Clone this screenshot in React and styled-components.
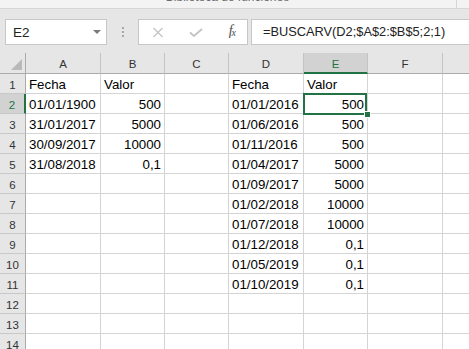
import React from 'react';
import styled, {createGlobalStyle} from 'styled-components';

const GREEN = '#217346';
const FONT = '"Liberation Sans", Arial, sans-serif';

// row header + columns A..G
const colWidths = [26, 75, 64, 64, 75, 64, 75, 75];
// last grid column (G) is only partly on screen, its letter lies past the edge
const letters = ['A', 'B', 'C', 'D', 'E', 'F', ''];

const left = [
  ['Fecha', 'Valor'],
  ['01/01/1900', '500'],
  ['31/01/2017', '5000'],
  ['30/09/2017', '10000'],
  ['31/08/2018', '0,1'],
];

const right = [
  ['Fecha', 'Valor'],
  ['01/01/2016', '500'],
  ['01/06/2016', '500'],
  ['01/11/2016', '500'],
  ['01/04/2017', '5000'],
  ['01/09/2017', '5000'],
  ['01/02/2018', '10000'],
  ['01/07/2018', '10000'],
  ['01/12/2018', '0,1'],
  ['01/05/2019', '0,1'],
  ['01/10/2019', '0,1'],
];

const ROWS = 14;
const SEL = {row: 2, col: 'E'};

function cellValue(r, c) {
  const L = left[r - 1];
  const R = right[r - 1];
  if (c === 'A' && L) return {text: L[0]};
  if (c === 'B' && L) return {text: L[1], num: r > 1};
  if (c === 'D' && R) return {text: R[0]};
  if (c === 'E' && R) return {text: R[1], num: r > 1};
  return {text: ''};
}

export default function App() {
  return (
    <>
      <GlobalStyle/>
      <Ribbon>
        <RibbonLabel>Biblioteca de funciones</RibbonLabel>
        <RibbonSep/>
      </Ribbon>
      <Toolbar>
        <NameBox>
          <span>E2</span>
          <Caret/>
        </NameBox>
        <Grip>
          <i/><i/><i/>
        </Grip>
        <FxButtons>
          <svg width="12" height="11" viewBox="0 0 12 11">
            <path d="M1.5 1 L10.5 10 M10.5 1 L1.5 10" stroke="#c3c3c3" strokeWidth="1.2" fill="none"/>
          </svg>
          <svg width="14" height="9" viewBox="0 0 14 9">
            <path d="M1 4.5 L5 8 L13 1" stroke="#c3c3c3" strokeWidth="1.8" fill="none"/>
          </svg>
          <Fx>f<sub>x</sub></Fx>
        </FxButtons>
        <FormulaInput>=BUSCARV(D2;$A$2:$B$5;2;1)</FormulaInput>
      </Toolbar>
      <Sheet>
        <Corner/>
        {letters.map((l, i) => (
          <ColHead key={i} $active={l === SEL.col}>{l}</ColHead>
        ))}
        {Array.from({length: ROWS}, (_, i) => i + 1).map(r => (
          <React.Fragment key={r}>
            <RowHead $active={r === SEL.row}>{r}</RowHead>
            {letters.map((c, i) => {
              const v = cellValue(r, c);
              return (
                <Cell key={i} $num={v.num} $selected={r === SEL.row && c === SEL.col}>
                  {v.text}
                </Cell>
              );
            })}
          </React.Fragment>
        ))}
      </Sheet>
    </>
  );
}

// ---- Styled

const GlobalStyle = createGlobalStyle`
  html, body {
    margin: 0;
    background: #fff;
    font-family: ${FONT};
    overflow: hidden;
  }
`;

const Ribbon = styled.div`
  position: relative;
  height: 8px;
  background: #f3f3f3;
  border-bottom: 1px solid #d6d6d6;
  overflow: hidden;
  display: flex;
  justify-content: center;
`;

const RibbonLabel = styled.span`
  margin-top: -11px;
  margin-left: -14px;
  font-size: 12px;
  line-height: 16px;
  color: #6d6d6d;
`;

const RibbonSep = styled.div`
  position: absolute;
  left: 456px;
  top: 0;
  width: 1px;
  height: 8px;
  background: #d6d6d6;
`;

const Toolbar = styled.div`
  height: 44px;
  box-sizing: border-box;
  padding: 10px 0 0 5px;
  background: #e6e6e6;
  display: flex;
  align-items: flex-start;
`;

const NameBox = styled.div`
  width: 102px;
  height: 26px;
  box-sizing: border-box;
  border: 1px solid #c6c6c6;
  background: #fff;
  display: flex;
  align-items: center;
  justify-content: space-between;
  padding: 0 5px 0 7px;
  font-size: 13.5px;
  color: #222;
`;

const Caret = styled.div`
  width: 0;
  height: 0;
  border-left: 4px solid transparent;
  border-right: 4px solid transparent;
  border-top: 4px solid #7a7a7a;
`;

const Grip = styled.div`
  width: 31px;
  height: 26px;
  display: flex;
  flex-direction: column;
  align-items: center;
  justify-content: center;
  gap: 2px;

  i {
    display: block;
    width: 2px;
    height: 2px;
    background: #a8a8a8;
  }
`;

const FxButtons = styled.div`
  width: 110px;
  height: 26px;
  box-sizing: border-box;
  border: 1px solid #c6c6c6;
  background: #fff;
  display: flex;
  align-items: center;
  padding: 0 11px 0 13px;
  justify-content: space-between;
`;

const Fx = styled.span`
  font-family: "Liberation Serif", "Times New Roman", serif;
  font-style: italic;
  font-size: 14px;
  color: #4a4a4a;
  margin-top: -2px;

  sub {
    font-size: 10px;
    vertical-align: -1px;
    margin-left: -1px;
  }
`;

const FormulaInput = styled.div`
  flex: 1;
  margin-left: 3px;
  height: 26px;
  box-sizing: border-box;
  border: 1px solid #c6c6c6;
  border-right: none;
  background: #fff;
  padding: 0 0 0 11px;
  font-size: 12.8px;
  line-height: 24px;
  color: #222;
  white-space: nowrap;
`;

const Sheet = styled.div`
  display: grid;
  grid-template-columns: ${colWidths.map(w => w + 'px').join(' ')};
  grid-auto-rows: 20px;
  grid-template-rows: 21px;
  background: #fff;
  width: max-content;
`;

const Corner = styled.div`
  background: #e6e6e6;
  border-right: 1px solid #ababab;
  border-bottom: 1px solid #ababab;
  position: relative;

  &::after {
    content: '';
    position: absolute;
    right: 3px;
    bottom: 3px;
    width: 0;
    height: 0;
    border-left: 11px solid transparent;
    border-bottom: 11px solid #b9b9b9;
  }
`;

const ColHead = styled.div`
  background: ${p => p.$active ? '#d2d2d2' : '#e6e6e6'};
  border-right: 1px solid #c4c4c4;
  border-bottom: ${p => p.$active ? `2px solid ${GREEN}` : '1px solid #ababab'};
  box-sizing: border-box;
  text-align: center;
  font-size: 11.5px;
  line-height: 19px;
  padding-top: 2px;
  color: ${p => p.$active ? GREEN : '#333'};
  overflow: hidden;
`;

const RowHead = styled.div`
  background: ${p => p.$active ? '#d2d2d2' : '#e6e6e6'};
  border-right: ${p => p.$active ? `2px solid ${GREEN}` : '1px solid #ababab'};
  border-bottom: 1px solid #c8c8c8;
  box-sizing: border-box;
  text-align: center;
  font-size: 11.5px;
  line-height: 16px;
  padding-top: 3px;
  color: ${p => p.$active ? GREEN : '#333'};
`;

const Cell = styled.div`
  position: relative;
  box-sizing: border-box;
  border-right: 1px solid #d4d4d4;
  border-bottom: 1px solid #d4d4d4;
  padding: 2px 3px 0 3px;
  font-size: 13.3px;
  line-height: 17px;
  color: #000;
  white-space: nowrap;
  text-align: ${p => p.$num ? 'right' : 'left'};

  ${p => p.$selected && `
    z-index: 2;
    &::before {
      content: '';
      position: absolute;
      left: -1px;
      top: -1px;
      right: 0;
      bottom: -2px;
      border: 2px solid ${GREEN};
    }
    &::after {
      content: '';
      position: absolute;
      right: -3px;
      bottom: -4px;
      width: 5px;
      height: 5px;
      background: ${GREEN};
      box-shadow: 0 0 0 1px #fff;
    }
  `}
`;
